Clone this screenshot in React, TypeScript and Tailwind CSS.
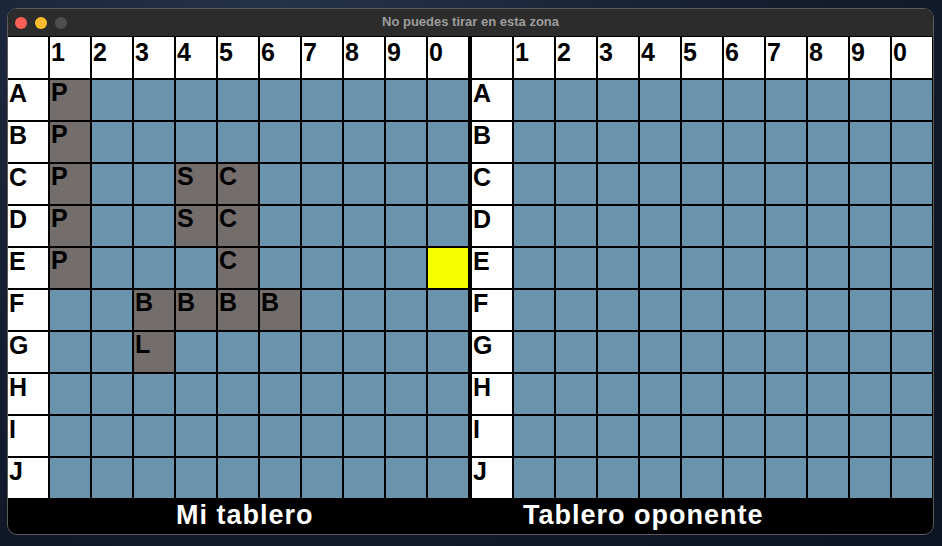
import { Fragment } from "react";

const COLS = ["1", "2", "3", "4", "5", "6", "7", "8", "9", "0"];
const ROWS = ["A", "B", "C", "D", "E", "F", "G", "H", "I", "J"];

// my board: ships by letter, "Y" = the last (yellow) highlighted cell
const MINE: Record<string, string> = {
  A1: "P",
  B1: "P",
  C1: "P",
  C4: "S",
  C5: "C",
  D1: "P",
  D4: "S",
  D5: "C",
  E1: "P",
  E5: "C",
  E0: "Y",
  F3: "B",
  F4: "B",
  F5: "B",
  F6: "B",
  G3: "L",
};

const font = { fontFamily: '"Liberation Sans", Arial, sans-serif' };

function Board({ ships }: { ships: Record<string, string> }) {
  return (
    <div className="grid grid-cols-[repeat(11,40px)] grid-rows-[41px_repeat(10,40px)] gap-[2px] bg-black">
      <div className="bg-white" />
      {COLS.map(c => (
        <div key={c} className="bg-white pl-[1px] pt-[3px] text-[25px] font-bold leading-none text-black">{c}</div>
      ))}
      {ROWS.map(r => (
        <Fragment key={r}>
          <div className="bg-white pl-[1px] pt-[1px] text-[25px] font-bold leading-none text-black">{r}</div>
          {COLS.map(c => {
            const v = ships[r + c];
            if (v === "Y") return <div key={c} className="bg-[#f5ff00]" />;
            if (v) return <div key={c} className="bg-[#736e6c] pl-[1px] text-[25px] font-bold leading-none text-black">{v}</div>;
            return <div key={c} className="bg-[#6b93ac]" />;
          })}
        </Fragment>
      ))}
    </div>
  );
}

export default function App() {
  return (
    <div className="h-[546px] w-[942px] overflow-hidden bg-[radial-gradient(ellipse_at_30%_0%,#24324a_0%,#141d2e_55%,#0c1322_100%)] pl-[7px] pt-[8px]" style={font}>
      <div className="flex h-[527px] w-[927px] flex-col overflow-hidden rounded-[10px] border border-[#5b5b5b] bg-black">
        <div className="relative flex h-[28px] shrink-0 items-center border-b border-black bg-[#2c2c2c]">
          <div className="flex gap-[8px] pl-[7px]">
            <span className="h-[12px] w-[12px] rounded-full bg-[#fe5f57]" />
            <span className="h-[12px] w-[12px] rounded-full bg-[#febc2e]" />
            <span className="h-[12px] w-[12px] rounded-full bg-[#4e4e4e]" />
          </div>
          <div className="absolute inset-0 flex items-center justify-center pb-[1px] text-[13px] font-bold text-[#9c9c9c]">
            No puedes tirar en esta zona
          </div>
        </div>
        <div className="flex gap-[4px] bg-black">
          <Board ships={MINE} />
          <Board ships={{}} />
        </div>
        <div className="flex flex-1 pl-[168px] pt-[4px] text-[27px] font-bold leading-none tracking-[1px] text-white">
          <span className="w-[347px]">Mi tablero</span>
          <span>Tablero oponente</span>
        </div>
      </div>
    </div>
  );
}
